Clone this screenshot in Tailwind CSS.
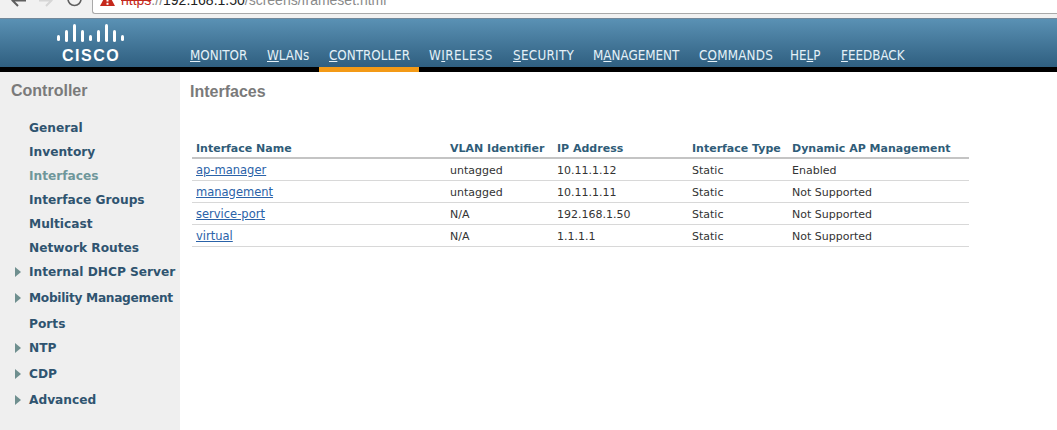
<!DOCTYPE html>
<html lang="en">
<head>
    <meta charset="UTF-8">
    <title>Interfaces</title>
    <script src="https://cdn.jsdelivr.net/npm/@tailwindcss/browser@4"></script>
</head>
<body class="bg-white h-[430px] w-[1057px] overflow-hidden font-['DejaVu_Sans',sans-serif]">

    <!-- browser toolbar, cut off at the top -->
    <div class="h-[18px] bg-[#f1f1f1] flex overflow-hidden">
        <div class="w-[92px] shrink-0 flex items-start pl-[11px] text-[#5f5f5f]">
            <svg class="shrink-0" width="15" height="7" viewBox="0 0 15 7" fill="none" stroke="currentColor" stroke-width="2"><path d="M15 0.5H2M7 -5L1.5 0.5 7 6"/></svg>
            <svg class="shrink-0 ml-[13px]" width="14" height="7" viewBox="0 0 14 7" fill="none" stroke="#d6d6d6" stroke-width="2"><path d="M0 0.5h12M7 -5l5.5 5.5L7 6"/></svg>
            <svg class="shrink-0 ml-[14px]" width="15" height="7" viewBox="0 0 15 7" fill="none" stroke="currentColor" stroke-width="1.6"><path d="M14 -1a6.5 6.5 0 0 1-13 0"/></svg>
        </div>
        <div class="flex-1 h-[14px] bg-white border-l border-b border-[#a9a9a9] rounded-bl-[3px] flex items-start pl-[7px] overflow-hidden">
            <svg class="shrink-0" width="15" height="6" viewBox="0 0 15 6"><path d="M7.5 -8L15 6H0z" fill="#c5281c"/><rect x="6.5" y="-2" width="2" height="3.5" fill="#fff"/><rect x="6.5" y="2.8" width="2" height="2" fill="#fff"/></svg>
            <span class="ml-[6px] -mt-[7px] text-[14px] leading-[14px] whitespace-nowrap font-['Liberation_Sans',sans-serif]"><span class="text-[#c5281c] line-through">https</span><span class="text-[#8a8a8a]">://</span><span class="text-[#222]">192.168.1.50</span><span class="text-[#8a8a8a]">/screens/frameset.html</span></span>
        </div>
    </div>

    <!-- header -->
    <header class="h-[49px] bg-gradient-to-b from-[#5a91b4] to-[#2f5f80] border-t border-[#73889a] flex">
        <div class="w-[190px] shrink-0 pl-[57px] pt-[5px]">
            <svg class="block" width="68" height="18" viewBox="0 0 68 18" fill="#fff">
                <rect x="0" y="11" width="3" height="6" rx="1.5"/>
                <rect x="8" y="6" width="3" height="12" rx="1.5"/>
                <rect x="16" y="0" width="3" height="18" rx="1.5"/>
                <rect x="24" y="6" width="3" height="12" rx="1.5"/>
                <rect x="32" y="11" width="3" height="6" rx="1.5"/>
                <rect x="40" y="6" width="3" height="12" rx="1.5"/>
                <rect x="48" y="0" width="3" height="18" rx="1.5"/>
                <rect x="56" y="6" width="3" height="12" rx="1.5"/>
                <rect x="64" y="11" width="3" height="6" rx="1.5"/>
            </svg>
            <div class="pl-[5px] mt-[6px] text-white font-bold text-[16px] leading-[16px] tracking-[1.5px] font-['Liberation_Sans',sans-serif]">CISCO</div>
        </div>
        <nav class="flex items-end pb-[3px] text-[13.3px] leading-[16px] text-[#e4f1f8] font-['DejaVu_Sans_Condensed','DejaVu_Sans',sans-serif] whitespace-nowrap">
            <a class="w-[77px]"><u>M</u>ONITOR</a>
            <a class="w-[62px]"><u>W</u>LANs</a>
            <a class="w-[100px]"><u>C</u>ONTROLLER</a>
            <a class="w-[84px] tracking-[0.4px]">W<u>I</u>RELESS</a>
            <a class="w-[80px] tracking-[0.3px]"><u>S</u>ECURITY</a>
            <a class="w-[106px]">M<u>A</u>NAGEMENT</a>
            <a class="w-[91px] tracking-[0.2px]">C<u>O</u>MMANDS</a>
            <a class="w-[51px]">HE<u>L</u>P</a>
            <a><u>F</u>EEDBACK</a>
        </nav>
    </header>
    <div class="h-[5px] bg-black pl-[319px]"><div class="w-[100px] h-full bg-[#f39a16]"></div></div>

    <div class="flex h-[358px]">
        <!-- sidebar -->
        <aside class="w-[180px] shrink-0 bg-[#efefef] pl-[11px] pt-[9px]">
            <h2 class="text-[16px] leading-[20px] font-bold text-[#7a7a7a] font-['Liberation_Sans',sans-serif]">Controller</h2>
            <ul class="mt-[15px] text-[12.2px] font-bold text-[#2f5470] whitespace-nowrap">
                <li class="h-[24px] leading-[24px] pl-[18px]">General</li>
                <li class="h-[24px] leading-[24px] pl-[18px]">Inventory</li>
                <li class="h-[24px] leading-[24px] pl-[18px] text-[#6f979b]">Interfaces</li>
                <li class="h-[24px] leading-[24px] pl-[18px]">Interface Groups</li>
                <li class="h-[24px] leading-[24px] pl-[18px]">Multicast</li>
                <li class="h-[24px] leading-[24px] pl-[18px]">Network Routes</li>
                <li class="h-[24px] flex items-center gap-[8px] pl-[4px]"><svg class="shrink-0" width="6" height="10" viewBox="0 0 6 10" fill="#6f8f8f"><path d="M0 0l6 5-6 5z"/></svg>Internal DHCP Server</li>
                <li class="h-[28px] flex items-center gap-[8px] pl-[4px] tracking-[-0.3px]"><svg class="shrink-0" width="6" height="10" viewBox="0 0 6 10" fill="#6f8f8f"><path d="M0 0l6 5-6 5z"/></svg>Mobility Management</li>
                <li class="h-[24px] leading-[24px] pl-[18px]">Ports</li>
                <li class="h-[24px] flex items-center gap-[8px] pl-[4px]"><svg class="shrink-0" width="6" height="10" viewBox="0 0 6 10" fill="#6f8f8f"><path d="M0 0l6 5-6 5z"/></svg>NTP</li>
                <li class="h-[28px] flex items-center gap-[8px] pl-[4px]"><svg class="shrink-0" width="6" height="10" viewBox="0 0 6 10" fill="#6f8f8f"><path d="M0 0l6 5-6 5z"/></svg>CDP</li>
                <li class="h-[24px] flex items-center gap-[8px] pl-[4px]"><svg class="shrink-0" width="6" height="10" viewBox="0 0 6 10" fill="#6f8f8f"><path d="M0 0l6 5-6 5z"/></svg>Advanced</li>
            </ul>
        </aside>

        <!-- content -->
        <main class="flex-1 pl-[10px] pt-[10px]">
            <h1 class="text-[16px] leading-[20px] font-bold text-[#7a7a7a] font-['Liberation_Sans',sans-serif]">Interfaces</h1>
            <table class="mt-[36px] ml-[2px] w-[777px] table-fixed border-separate border-spacing-0 text-[11px] leading-[14px] text-[#333]">
                <thead>
                    <tr class="h-[21px] text-left text-[#2f5c78]">
                        <th class="w-[254px] pl-[4px] pt-[3px] font-bold border-b-2 border-[#c4c4c4]">Interface Name</th>
                        <th class="w-[107px] pl-[4px] pt-[3px] font-bold border-b-2 border-[#c4c4c4]">VLAN Identifier</th>
                        <th class="w-[135px] pl-[4px] pt-[3px] font-bold border-b-2 border-[#c4c4c4]">IP Address</th>
                        <th class="w-[100px] pl-[4px] pt-[3px] font-bold border-b-2 border-[#c4c4c4]">Interface Type</th>
                        <th class="pl-[4px] pt-[3px] font-bold border-b-2 border-[#c4c4c4]">Dynamic AP Management</th>
                    </tr>
                </thead>
                <tbody>
                    <tr class="h-[22px]">
                        <td class="pl-[4px] pt-[1px] border-b border-[#d8d8d8]"><a href="#" class="text-[11.5px] text-[#2a62a8] underline">ap-manager</a></td>
                        <td class="pl-[4px] pt-[3px] border-b border-[#d8d8d8]">untagged</td>
                        <td class="pl-[4px] pt-[3px] border-b border-[#d8d8d8]">10.11.1.12</td>
                        <td class="pl-[4px] pt-[3px] border-b border-[#d8d8d8]">Static</td>
                        <td class="pl-[4px] pt-[3px] border-b border-[#d8d8d8]">Enabled</td>
                    </tr>
                    <tr class="h-[22px]">
                        <td class="pl-[4px] pt-[1px] border-b border-[#d8d8d8]"><a href="#" class="text-[11.5px] text-[#2a62a8] underline">management</a></td>
                        <td class="pl-[4px] pt-[3px] border-b border-[#d8d8d8]">untagged</td>
                        <td class="pl-[4px] pt-[3px] border-b border-[#d8d8d8]">10.11.1.11</td>
                        <td class="pl-[4px] pt-[3px] border-b border-[#d8d8d8]">Static</td>
                        <td class="pl-[4px] pt-[3px] border-b border-[#d8d8d8]">Not Supported</td>
                    </tr>
                    <tr class="h-[22px]">
                        <td class="pl-[4px] pt-[1px] border-b border-[#d8d8d8]"><a href="#" class="text-[11.5px] text-[#2a62a8] underline">service-port</a></td>
                        <td class="pl-[4px] pt-[3px] border-b border-[#d8d8d8]">N/A</td>
                        <td class="pl-[4px] pt-[3px] border-b border-[#d8d8d8]">192.168.1.50</td>
                        <td class="pl-[4px] pt-[3px] border-b border-[#d8d8d8]">Static</td>
                        <td class="pl-[4px] pt-[3px] border-b border-[#d8d8d8]">Not Supported</td>
                    </tr>
                    <tr class="h-[22px]">
                        <td class="pl-[4px] pt-[1px] border-b border-[#d8d8d8]"><a href="#" class="text-[11.5px] text-[#2a62a8] underline">virtual</a></td>
                        <td class="pl-[4px] pt-[3px] border-b border-[#d8d8d8]">N/A</td>
                        <td class="pl-[4px] pt-[3px] border-b border-[#d8d8d8]">1.1.1.1</td>
                        <td class="pl-[4px] pt-[3px] border-b border-[#d8d8d8]">Static</td>
                        <td class="pl-[4px] pt-[3px] border-b border-[#d8d8d8]">Not Supported</td>
                    </tr>
                </tbody>
            </table>
        </main>
    </div>

</body>
</html>
